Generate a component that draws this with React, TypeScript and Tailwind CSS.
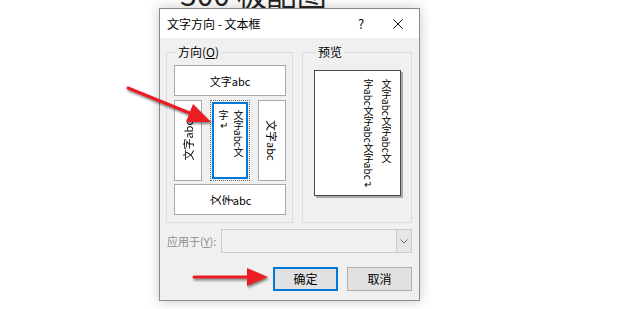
import React from "react";

const font = { fontFamily: '"Noto Sans CJK SC", "Noto Sans", sans-serif' };

function Btn({ children, className = "" }: { children: React.ReactNode; className?: string }) {
  return (
    <div className={`bg-white border border-[#a8a8a8] flex items-center justify-center overflow-hidden ${className}`}>
      {children}
    </div>
  );
}

function Para() {
  return <span className="inline-block -rotate-90">↵</span>;
}

export default function App() {
  return (
    <div className="relative w-[620px] h-[309px] bg-white overflow-hidden text-black" style={font}>
      {/* background document text, cut off at top */}
      <div className="h-[8px] overflow-hidden pl-[180px]">
        <div className="text-[30px] leading-[30px] mt-[-22px] text-[#222] whitespace-nowrap">300 极酷图</div>
      </div>

      {/* dialog */}
      <div className="ml-[159px] w-[261px] h-[293px] border border-[#8a8a8a] bg-[#f0f0f0] shadow-[0_0_12px_rgba(0,0,0,0.22)] flex flex-col">
        {/* title bar */}
        <div className="h-[29px] bg-white flex items-center pl-[7px] shrink-0">
          <div className="text-[12px] leading-[14px] flex-1">文字方向 - 文本框</div>
          <div className="w-[20px] text-center text-[13px] leading-[14px] mr-[20px]">?</div>
          <div className="w-[14px] h-[14px] mr-[14px] flex items-center justify-center">
            <svg width="10" height="10" viewBox="0 0 10 10">
              <path d="M0.5 0.5 L9.5 9.5 M9.5 0.5 L0.5 9.5" stroke="#111" strokeWidth="1" fill="none" />
            </svg>
          </div>
        </div>

        {/* body */}
        <div className="flex flex-col pl-[6px] pr-[7px] pt-[7px]">
          <div className="flex gap-[9px] items-stretch">
            {/* direction group */}
            <fieldset className="w-[127px] h-[178px] border border-[#dcdcdc] pl-[7px] pr-[6px] pt-[6px]">
              <legend className="text-[12px] leading-[14px] ml-[2px] px-[2px]">
                方向(<span className="underline">O</span>)
              </legend>
              <div className="flex flex-col">
                <Btn className="w-[112px] h-[31px]">
                  <span className="text-[11px] leading-[12px]">文字abc</span>
                </Btn>
                <div className="flex gap-[8px] mt-[4px] h-[81px]">
                  <Btn className="w-[28px] h-[81px]">
                    <span className="text-[11px] leading-[12px] whitespace-nowrap [writing-mode:vertical-rl] [text-orientation:sideways] rotate-180">
                      文字abc
                    </span>
                  </Btn>
                  <div className="w-[40px] h-[81px] border border-dotted border-[#6a6a6a] p-[1px]">
                    <div className="w-full h-full border-2 border-[#0078d7] bg-white flex justify-end pt-[6px]">
                      <div className="[writing-mode:vertical-rl] text-[10px] leading-[15px] whitespace-nowrap">
                        文字abc文<br />字<Para />
                      </div>
                    </div>
                  </div>
                  <Btn className="w-[28px] h-[81px]">
                    <span className="text-[11px] leading-[12px] whitespace-nowrap [writing-mode:vertical-rl] [text-orientation:sideways]">
                      文字abc
                    </span>
                  </Btn>
                </div>
                <Btn className="w-[112px] h-[31px] mt-[3px]">
                  <span className="text-[11px] leading-[12px] whitespace-nowrap flex items-center">
                    <span className="inline-block w-[12px] text-center -rotate-90">文</span>
                    <span className="inline-block w-[12px] text-center -rotate-90">字</span>
                    <span>abc</span>
                  </span>
                </Btn>
              </div>
            </fieldset>

            {/* preview group */}
            <fieldset className="w-[110px] h-[178px] border border-[#dcdcdc] pl-[11px] pt-[11px]">
              <legend className="text-[12px] leading-[14px] ml-[2px] px-[2px]">预览</legend>
              <div className="w-[87px] h-[126px] bg-white border border-[#4a4a4a] shadow-[2px_2px_0_#a8a8a8] flex justify-end pr-[5px] pt-[8px]">
                <div className="[writing-mode:vertical-rl] text-[10px] leading-[18px] whitespace-nowrap">
                  文字abc文字abc文<br />字abc文字abc文字abc<Para />
                </div>
              </div>
            </fieldset>
          </div>

          {/* apply to */}
          <div className="flex items-center mt-[6px] h-[24px]">
            <div className="w-[55px] pl-[1px] text-[11px] leading-[14px] text-[#8d8d8d] whitespace-nowrap">
              应用于(<span className="underline">Y</span>):
            </div>
            <div className="flex-1 h-[24px] border border-[#cccccc] bg-[#f0f0f0] flex justify-end">
              <div className="w-[15px] h-full border-l border-[#cccccc] bg-[#e6e6e6] flex items-center justify-center">
                <svg width="8" height="5" viewBox="0 0 8 5">
                  <path d="M0.5 0.5 L4 4 L7.5 0.5" stroke="#6d6d6d" strokeWidth="1" fill="none" />
                </svg>
              </div>
            </div>
          </div>

          {/* buttons */}
          <div className="flex justify-end gap-[9px] mt-[14px]">
            <div className="w-[65px] h-[24px] bg-[#e1e1e1] border border-[#0078d7] shadow-[inset_0_0_0_1px_#0078d7] flex items-center justify-center text-[12px] leading-[14px]">
              确定
            </div>
            <div className="w-[65px] h-[24px] bg-[#e1e1e1] border border-[#adadad] flex items-center justify-center text-[12px] leading-[14px]">
              取消
            </div>
          </div>
        </div>
      </div>

      {/* red arrows overlay */}
      <svg
        className="absolute inset-0 pointer-events-none drop-shadow-[1px_2px_1px_rgba(0,0,0,0.45)]"
        width="620"
        height="309"
        viewBox="0 0 620 309"
      >
        <line x1="128" y1="88" x2="192" y2="114" stroke="#ec1c24" strokeWidth="3" strokeLinecap="round" />
        <polygon points="211,122 186,122 193,104" fill="#ec1c24" />
        <line x1="194" y1="277" x2="252" y2="277" stroke="#ec1c24" strokeWidth="3" strokeLinecap="round" />
        <polygon points="268,277 247,268 247,286" fill="#ec1c24" />
      </svg>
    </div>
  );
}
